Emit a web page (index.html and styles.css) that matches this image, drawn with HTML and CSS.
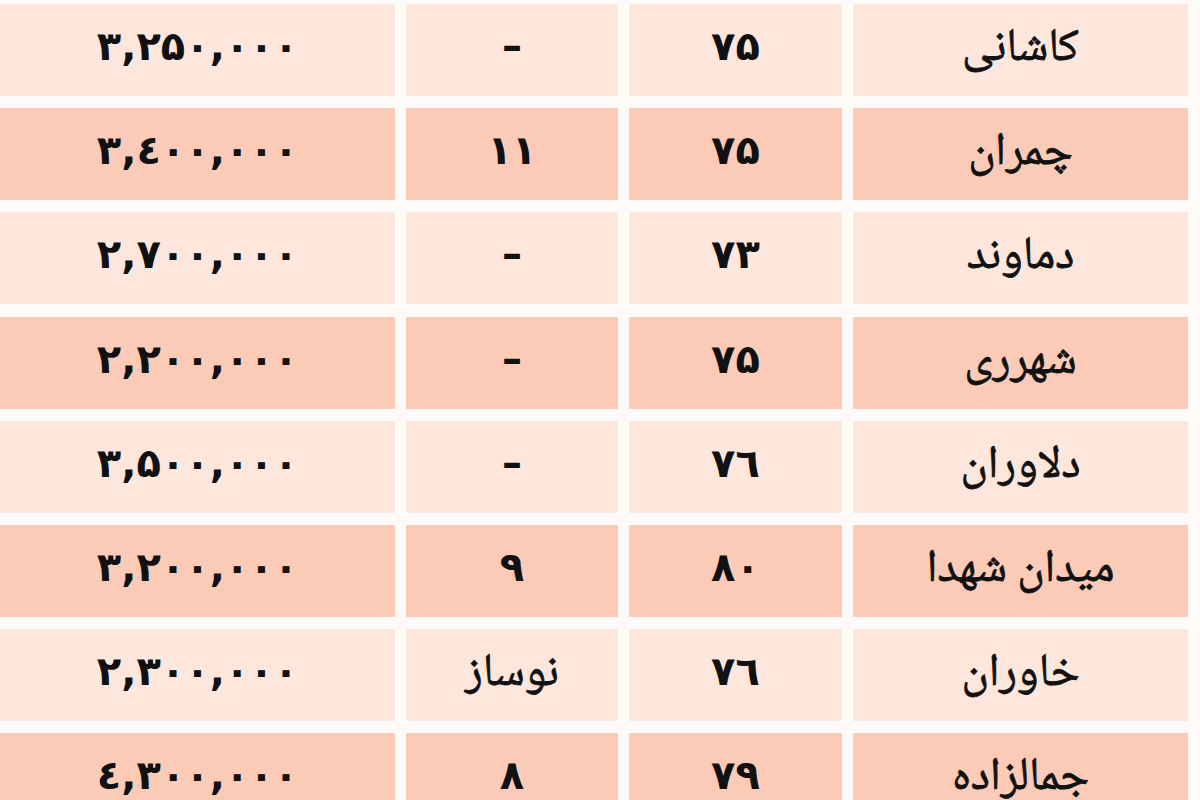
FILE: index.html
```html
<!DOCTYPE html>
<html lang="fa" dir="rtl">
<head>
<meta charset="utf-8">
<title>جدول قیمت</title>
<link rel="stylesheet" href="styles.css">
</head>
<body>
<div class="table">
  <div class="row light">
    <div class="cell name">کاشانی</div>
    <div class="cell num">۷۵</div>
    <div class="cell num">–</div>
    <div class="cell num price">۳,۲۵۰,۰۰۰</div>
  </div>
  <div class="row dark">
    <div class="cell name">چمران</div>
    <div class="cell num">۷۵</div>
    <div class="cell num">۱۱</div>
    <div class="cell num price">۳,٤۰۰,۰۰۰</div>
  </div>
  <div class="row light">
    <div class="cell name">دماوند</div>
    <div class="cell num">۷۳</div>
    <div class="cell num">–</div>
    <div class="cell num price">۲,۷۰۰,۰۰۰</div>
  </div>
  <div class="row dark">
    <div class="cell name">شهرری</div>
    <div class="cell num">۷۵</div>
    <div class="cell num">–</div>
    <div class="cell num price">۲,۲۰۰,۰۰۰</div>
  </div>
  <div class="row light">
    <div class="cell name">دلاوران</div>
    <div class="cell num">۷٦</div>
    <div class="cell num">–</div>
    <div class="cell num price">۳,۵۰۰,۰۰۰</div>
  </div>
  <div class="row dark">
    <div class="cell name">میدان شهدا</div>
    <div class="cell num">۸۰</div>
    <div class="cell num">۹</div>
    <div class="cell num price">۳,۲۰۰,۰۰۰</div>
  </div>
  <div class="row light">
    <div class="cell name">خاوران</div>
    <div class="cell num">۷٦</div>
    <div class="cell name">نوساز</div>
    <div class="cell num price">۲,۳۰۰,۰۰۰</div>
  </div>
  <div class="row dark">
    <div class="cell name">جمالزاده</div>
    <div class="cell num">۷۹</div>
    <div class="cell num">۸</div>
    <div class="cell num price">٤,۳۰۰,۰۰۰</div>
  </div>
</div>
</body>
</html>
```
FILE: styles.css
```css
html, body {
  margin: 0;
  padding: 0;
  width: 1200px;
  height: 800px;
  overflow: hidden;
  background: #fefaf8;
}

.table {
  display: flex;
  flex-direction: column;
  row-gap: 12.2px;
  padding-top: 4px;
  padding-right: 12px;
  width: 1188px;
  direction: rtl;
}

.row {
  display: grid;
  grid-template-columns: 335px 213px 212px 395px;
  column-gap: 11px;
  height: 92px;
}

.cell {
  display: flex;
  align-items: center;
  justify-content: center;
  color: #111;
  box-sizing: border-box;
}

.light .cell { background: #fde7dd; }
.dark .cell { background: #fbcbb7; }

.num {
  font-family: "DejaVu Sans", sans-serif;
  font-weight: bold;
  font-size: 40px;
  padding-bottom: 8px;
  direction: ltr;
  unicode-bidi: isolate;
}

.name {
  font-family: "Noto Naskh Arabic", "DejaVu Sans", sans-serif;
  font-size: 46px;
  -webkit-text-stroke: 0.8px #111;
  padding-bottom: 0;
}
```
